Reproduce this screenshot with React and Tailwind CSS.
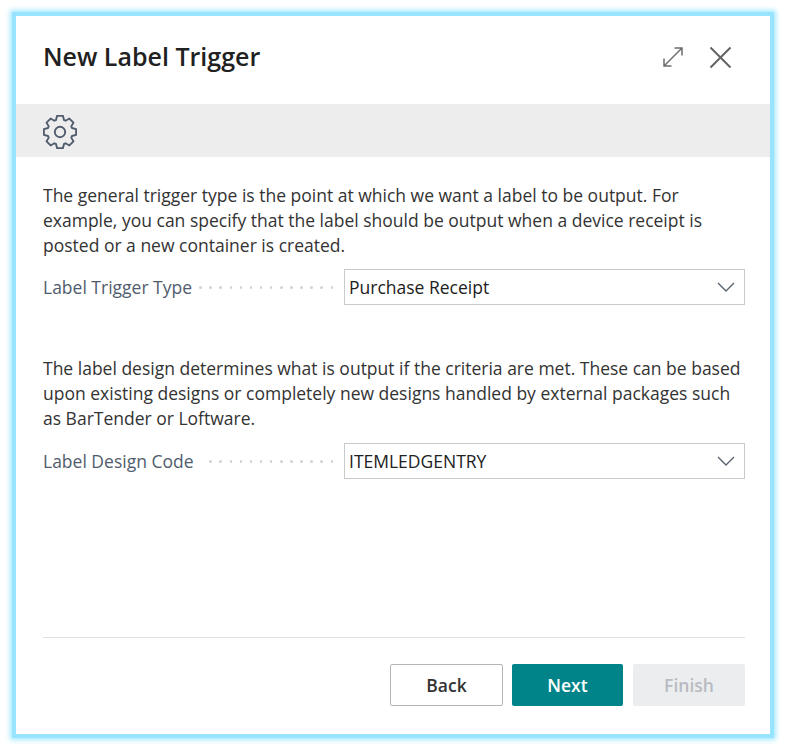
import React from "react";

function gearPath() {
  const cx = 17, cy = 17, teeth = 8;
  const pts = [];
  for (let i = 0; i < teeth; i++) {
    const a = (i * 2 * Math.PI) / teeth - Math.PI / 2;
    const step = (2 * Math.PI) / teeth;
    [[-0.33, 12.6], [-0.18, 16.4], [0.18, 16.4], [0.33, 12.6]].forEach(([o, r]) => {
      const t = a + o * step * 1.25;
      pts.push((cx + r * Math.cos(t)).toFixed(2) + " " + (cy + r * Math.sin(t)).toFixed(2));
    });
  }
  return "M" + pts.join("L") + "Z";
}

function Gear() {
  return (
    <svg width="34" height="34" viewBox="0 0 34 34" fill="none" stroke="#505c6d" strokeWidth="1.9" strokeLinejoin="round">
      <path d={gearPath()} />
      <circle cx="17" cy="17" r="5.2" />
    </svg>
  );
}

function Field({ label, value, dots }) {
  return (
    <div className="flex items-center h-[36px]">
      <span className="text-[17.5px] text-[#505c6d] whitespace-nowrap pt-[1px]">{label}</span>
      <div className="flex-1 flex justify-end gap-[7.6px] pr-[11px] pt-[1px] min-w-0 overflow-hidden">
        {Array.from({ length: dots }).map((_, i) => (
          <span key={i} className="w-[2.5px] h-[2.5px] rounded-full bg-[#cfd2d6] shrink-0" />
        ))}
      </div>
      <div className="w-[401px] h-[36px] border border-[#c8cacc] bg-white flex items-center justify-between pl-[4px] pr-[9px]">
        <span className="text-[17.5px] text-[#212121]">{value}</span>
        <svg width="18" height="10" viewBox="0 0 18 10" fill="none" stroke="#5a6470" strokeWidth="1.4">
          <path d="M1 1l8 8 8-8" />
        </svg>
      </div>
    </div>
  );
}

export default function App() {
  return (
    <div className="w-[786px] h-[750px] bg-white p-[16px] font-['Open_Sans','Noto_Sans',sans-serif]">
      <div className="w-[754px] h-[718px] bg-white flex flex-col shadow-[0_0_0_4px_#97e4fe,0_0_5px_6px_#a6e8ff]">
        <header className="h-[88px] flex items-center justify-between pl-[27px] pr-[38px] pb-[6px] shrink-0">
          <h1 className="text-[25px] font-semibold text-[#212121]">New Label Trigger</h1>
          <div className="flex items-center gap-[26px]">
            <svg width="20" height="20" viewBox="0 0 20 20" fill="none" stroke="#6e6e6e" strokeWidth="1.5">
              <path d="M1 19L19 1M11.5 1H19V8.5M1 11.5V19H8.5" />
            </svg>
            <svg width="23" height="23" viewBox="0 0 23 23" fill="none" stroke="#646464" strokeWidth="2">
              <path d="M1.5 1.5l20 20M21.5 1.5l-20 20" />
            </svg>
          </div>
        </header>
        <div className="h-[53px] bg-[#ededed] flex items-center pl-[27px] pt-[3px] shrink-0">
          <Gear />
        </div>
        <main className="flex-1 flex flex-col pl-[27px] pr-[25px] pt-[26px]">
          <p className="text-[17.5px] leading-[25px] text-[#333]">
            The general trigger type is the point at which we want a label to be output. For example, you can specify that the label should be output when a device receipt is posted or a new container is created.
          </p>
          <div className="mt-[11px]">
            <Field label="Label Trigger Type" value="Purchase Receipt" dots={14} />
          </div>
          <p className="mt-[51px] text-[17.5px] leading-[25px] text-[#333]">
            The label design determines what is output if the criteria are met. These can be based upon existing designs or completely new designs handled by external packages such as BarTender or Loftware.
          </p>
          <div className="mt-[12px]">
            <Field label="Label Design Code" value="ITEMLEDGENTRY" dots={13} />
          </div>
          <div className="mt-auto border-t border-[#e1e1e1] pt-[26px] pb-[28px] flex justify-end">
            <button className="w-[113px] h-[42px] border border-[#b5b5b5] rounded-[2px] bg-white text-[17.5px] font-semibold text-[#333]">Back</button>
            <button className="ml-[9px] w-[111px] h-[42px] rounded-[2px] bg-[#008489] text-[17.5px] font-semibold text-white">Next</button>
            <button className="ml-[10px] w-[112px] h-[42px] rounded-[2px] bg-[#ecedef] text-[17.5px] font-semibold text-[#b8bbc1]">Finish</button>
          </div>
        </main>
      </div>
    </div>
  );
}
